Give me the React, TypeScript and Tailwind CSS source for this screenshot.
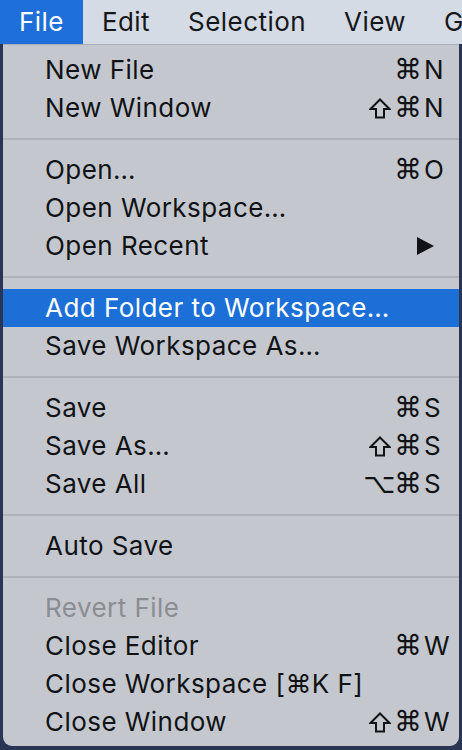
import React from "react";

type Item =
  | { type: "sep" }
  | {
      type: "item";
      label: string;
      mods?: string[];
      keyChar?: string;
      arrow?: boolean;
      active?: boolean;
      disabled?: boolean;
    };

const items: Item[] = [
  { type: "item", label: "New File", mods: ["⌘"], keyChar: "N" },
  { type: "item", label: "New Window", mods: ["⇧", "⌘"], keyChar: "N" },
  { type: "sep" },
  { type: "item", label: "Open…", mods: ["⌘"], keyChar: "O" },
  { type: "item", label: "Open Workspace…" },
  { type: "item", label: "Open Recent", arrow: true },
  { type: "sep" },
  { type: "item", label: "Add Folder to Workspace…", active: true },
  { type: "item", label: "Save Workspace As…" },
  { type: "sep" },
  { type: "item", label: "Save", mods: ["⌘"], keyChar: "S" },
  { type: "item", label: "Save As…", mods: ["⇧", "⌘"], keyChar: "S" },
  { type: "item", label: "Save All", mods: ["⌥", "⌘"], keyChar: "S" },
  { type: "sep" },
  { type: "item", label: "Auto Save" },
  { type: "sep" },
  { type: "item", label: "Revert File", disabled: true },
  { type: "item", label: "Close Editor", mods: ["⌘"], keyChar: "W" },
  { type: "item", label: "Close Workspace [⌘K F]" },
  { type: "item", label: "Close Window", mods: ["⇧", "⌘"], keyChar: "W" },
];

const menuBar = ["File", "Edit", "Selection", "View", "Go"];

function ShiftIcon() {
  return (
    <svg width="22" height="21" viewBox="0 0 22 21" className="inline-block">
      <path
        d="M11 1.5 L20.5 11 L15 11 L15 19.5 L7 19.5 L7 11 L1.5 11 Z"
        fill="none"
        stroke="#111215"
        strokeWidth="2"
        strokeLinejoin="miter"
      />
    </svg>
  );
}

export default function App() {
  return (
    <div
      className="w-[462px] h-[750px] bg-[#2a3554] flex flex-col overflow-hidden text-[26px] leading-none tracking-[0.45px]"
      style={{ fontFamily: "Inter, 'Noto Sans', sans-serif" }}
    >
      <div className="h-[44px] bg-[#d5dbe4] flex items-stretch shrink-0 whitespace-nowrap">
        {menuBar.map((m, i) => (
          <div
            key={m}
            className={
              i === 0
                ? "px-[19px] flex items-center bg-[#1e6fd9] text-white"
                : "px-[19px] flex items-center text-[#15171b]"
            }
          >
            {m}
          </div>
        ))}
      </div>
      <div className="ml-[3px] w-[456px] bg-[#c4c8ce] rounded-b-[9px] border-t border-[#a9aeb5] pt-[6px] pb-[5px]">
        {items.map((it, idx) =>
          it.type === "sep" ? (
            <div key={idx} className="h-[24px] flex items-center">
              <div className="h-[2px] w-full bg-[#aeb2b8]" />
            </div>
          ) : (
            <div
              key={idx}
              className={
                "h-[38px] flex items-center pl-[42px] " +
                (it.active
                  ? "bg-[#1d6fd8] text-white"
                  : it.disabled
                  ? "text-[#8a8d92]"
                  : "text-[#111215]")
              }
            >
              <span className="flex-1 whitespace-nowrap">{it.label}</span>
              {it.mods && (
                <span className="flex items-center">
                  {it.mods.map((m, j) => (
                    <span
                      key={j}
                      className="w-[29px] flex justify-center text-[28px]"
                      style={{ fontFamily: "'DejaVu Sans', sans-serif" }}
                    >
                      {m === "⇧" ? <ShiftIcon /> : m}
                    </span>
                  ))}
                </span>
              )}
              {it.keyChar && <span className="w-[36px] pl-[1px]">{it.keyChar}</span>}
              {it.arrow && (
                <span className="w-[36px] flex items-center">
                  <svg width="17" height="18" viewBox="0 0 17 18" className="-ml-[6px]">
                    <polygon points="0,0 17,9 0,18" fill="#111215" />
                  </svg>
                </span>
              )}
            </div>
          )
        )}
      </div>
    </div>
  );
}
